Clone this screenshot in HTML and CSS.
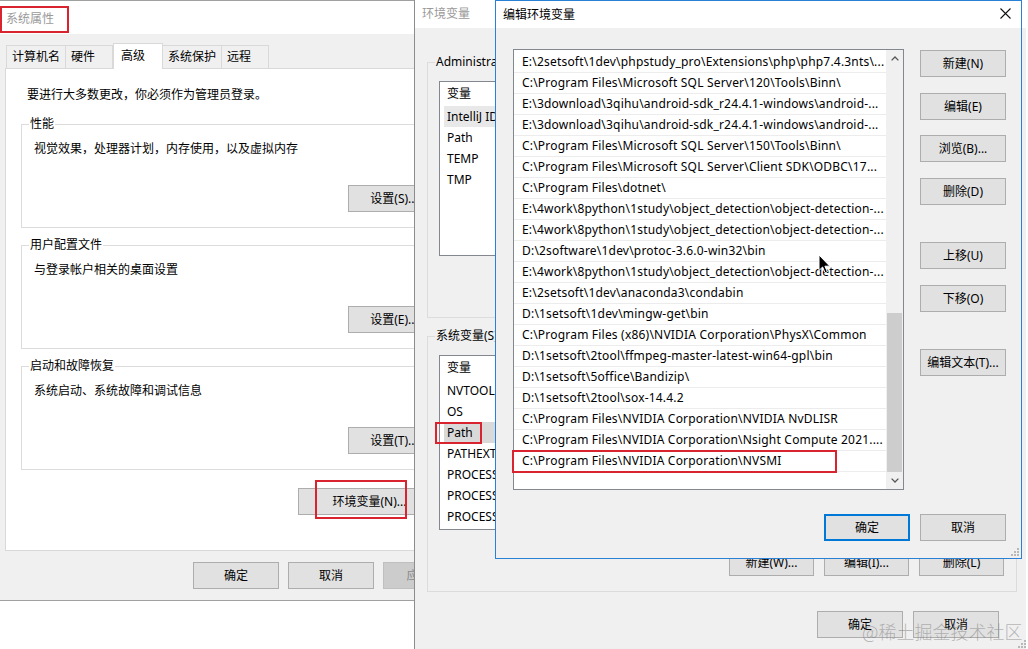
FILE: index.html
```html
<!DOCTYPE html>
<html lang="zh-CN">
<head>
    <meta charset="UTF-8">
    <meta name="viewport" content="width=device-width, initial-scale=1.0">
    <title>编辑环境变量</title>
    <link rel="stylesheet" href="styles.css">
</head>
<body>
<div class="desktop">

    <!-- 系统属性 -->
    <section class="win win-sys">
        <header class="titlebar"><span class="title">系统属性</span></header>
        <div class="sys-body">
            <div class="tabs">
                <span class="tab">计算机名</span>
                <span class="tab">硬件</span>
                <span class="tab active">高级</span>
                <span class="tab">系统保护</span>
                <span class="tab">远程</span>
            </div>
            <div class="tab-panel">
                <p class="notice">要进行大多数更改，你必须作为管理员登录。</p>

                <fieldset class="group">
                    <legend>性能</legend>
                    <p class="desc">视觉效果，处理器计划，内存使用，以及虚拟内存</p>
                    <div class="group-actions"><button class="btn btn-set">设置(S)...</button></div>
                </fieldset>

                <fieldset class="group">
                    <legend>用户配置文件</legend>
                    <p class="desc">与登录帐户相关的桌面设置</p>
                    <div class="group-actions"><button class="btn btn-set">设置(E)...</button></div>
                </fieldset>

                <fieldset class="group">
                    <legend>启动和故障恢复</legend>
                    <p class="desc">系统启动、系统故障和调试信息</p>
                    <div class="group-actions"><button class="btn btn-set">设置(T)...</button></div>
                </fieldset>

                <div class="env-row"><button class="btn btn-env">环境变量(N)...</button></div>
            </div>
            <div class="sys-actions">
                <button class="btn">确定</button>
                <button class="btn">取消</button>
                <button class="btn" disabled>应用(A)</button>
            </div>
        </div>
    </section>

    <!-- 环境变量 -->
    <section class="win win-env">
        <header class="titlebar"><span class="title">环境变量</span></header>
        <div class="env-body">
            <fieldset class="group var-group user-vars">
                <legend>Administrator 的用户变量(U)</legend>
                <div class="listview">
                    <div class="lv-head">变量</div>
                    <div class="lv-row hover">IntelliJ IDEA</div>
                    <div class="lv-row">Path</div>
                    <div class="lv-row">TEMP</div>
                    <div class="lv-row">TMP</div>
                </div>
            </fieldset>

            <fieldset class="group var-group">
                <legend>系统变量(S)</legend>
                <div class="listview">
                    <div class="lv-head">变量</div>
                    <div class="lv-row">NVTOOLSEXT_PATH</div>
                    <div class="lv-row">OS</div>
                    <div class="lv-row selected">Path</div>
                    <div class="lv-row">PATHEXT</div>
                    <div class="lv-row">PROCESSOR_ARCHITECTURE</div>
                    <div class="lv-row">PROCESSOR_IDENTIFIER</div>
                    <div class="lv-row">PROCESSOR_LEVEL</div>
                </div>
                <div class="var-actions">
                    <button class="btn">新建(W)...</button>
                    <button class="btn">编辑(I)...</button>
                    <button class="btn">删除(L)</button>
                </div>
            </fieldset>

            <div class="env-actions">
                <button class="btn">确定</button>
                <button class="btn">取消</button>
            </div>
        </div>
        <svg class="grip grip-env" width="8" height="8" viewBox="0 0 8 8"><g fill="#b8b8b8"><rect x="6" y="0" width="2" height="2"/><rect x="6" y="3" width="2" height="2"/><rect x="3" y="3" width="2" height="2"/><rect x="6" y="6" width="2" height="2"/><rect x="3" y="6" width="2" height="2"/><rect x="0" y="6" width="2" height="2"/></g></svg>
    </section>

    <!-- 编辑环境变量 -->
    <section class="win win-edit">
        <header class="titlebar">
            <span class="title">编辑环境变量</span>
            <svg class="close-icon" width="11" height="11" viewBox="0 0 11 11"><path d="M0.5 0.5L10.5 10.5M10.5 0.5L0.5 10.5" stroke="#111" stroke-width="1.1" fill="none"/></svg>
        </header>
        <div class="edit-body">
            <div class="listbox">
                <ul class="path-list">
                    <li>E:\2setsoft\1dev\phpstudy_pro\Extensions\php\php7.4.3nts\...</li>
                    <li>C:\Program Files\Microsoft SQL Server\120\Tools\Binn\</li>
                    <li>E:\3download\3qihu\android-sdk_r24.4.1-windows\android-...</li>
                    <li>E:\3download\3qihu\android-sdk_r24.4.1-windows\android-...</li>
                    <li>C:\Program Files\Microsoft SQL Server\150\Tools\Binn\</li>
                    <li>C:\Program Files\Microsoft SQL Server\Client SDK\ODBC\17...</li>
                    <li>C:\Program Files\dotnet\</li>
                    <li>E:\4work\8python\1study\object_detection\object-detection-...</li>
                    <li>E:\4work\8python\1study\object_detection\object-detection-...</li>
                    <li>D:\2software\1dev\protoc-3.6.0-win32\bin</li>
                    <li>E:\4work\8python\1study\object_detection\object-detection-...</li>
                    <li>E:\2setsoft\1dev\anaconda3\condabin</li>
                    <li>D:\1setsoft\1dev\mingw-get\bin</li>
                    <li>C:\Program Files (x86)\NVIDIA Corporation\PhysX\Common</li>
                    <li>D:\1setsoft\2tool\ffmpeg-master-latest-win64-gpl\bin</li>
                    <li>D:\1setsoft\5office\Bandizip\</li>
                    <li>D:\1setsoft\2tool\sox-14.4.2</li>
                    <li>C:\Program Files\NVIDIA Corporation\NVIDIA NvDLISR</li>
                    <li>C:\Program Files\NVIDIA Corporation\Nsight Compute 2021....</li>
                    <li>C:\Program Files\NVIDIA Corporation\NVSMI</li>
                </ul>
                <div class="scrollbar">
                    <span class="sb-arrow"><svg width="8" height="5" viewBox="0 0 8 5"><path d="M0.6 4.4L4 1L7.4 4.4" fill="none" stroke="#555" stroke-width="1.3"/></svg></span>
                    <span class="sb-track"><span class="sb-thumb"></span></span>
                    <span class="sb-arrow"><svg width="8" height="5" viewBox="0 0 8 5"><path d="M0.6 0.6L4 4L7.4 0.6" fill="none" stroke="#555" stroke-width="1.3"/></svg></span>
                </div>
            </div>

            <div class="side-buttons">
                <button class="btn">新建(N)</button>
                <button class="btn">编辑(E)</button>
                <button class="btn">浏览(B)...</button>
                <button class="btn">删除(D)</button>
                <button class="btn gap-before">上移(U)</button>
                <button class="btn">下移(O)</button>
                <button class="btn gap-before">编辑文本(T)...</button>
            </div>

            <div class="edit-actions">
                <button class="btn btn-default">确定</button>
                <button class="btn">取消</button>
            </div>
        </div>
        <svg class="grip grip-edit" width="8" height="8" viewBox="0 0 8 8"><g fill="#b8b8b8"><rect x="6" y="0" width="2" height="2"/><rect x="6" y="3" width="2" height="2"/><rect x="3" y="3" width="2" height="2"/><rect x="6" y="6" width="2" height="2"/><rect x="3" y="6" width="2" height="2"/><rect x="0" y="6" width="2" height="2"/></g></svg>
    </section>

    <!-- annotations -->
    <span class="mark mark-title"></span>
    <span class="mark mark-env"></span>
    <span class="mark mark-path"></span>
    <span class="mark mark-nvsmi"></span>

    <svg class="cursor" width="13" height="20" viewBox="0 0 13 20"><path d="M1 1V16.5L4.6 13L7.1 18.8L9.4 17.8L6.9 12.2H11.8Z" fill="#000" stroke="#fff" stroke-width="1" stroke-linejoin="round"/></svg>

    <div class="watermark">@稀土掘金技术社区</div>
</div>
</body>
</html>
```

FILE: styles.css
```css
* {
    box-sizing: border-box;
}

body {
    margin: 0;
    background: #fff;
    font-family: "Noto Sans", "Noto Sans CJK SC", sans-serif;
    font-size: 12px;
    color: #000;
}

p {
    margin: 0;
}

.desktop {
    position: relative;
    width: 1028px;
    height: 649px;
    overflow: hidden;
}

/* windows */
.win {
    position: absolute;
    top: 0;
    display: flex;
    flex-direction: column;
    background: #f0f0f0;
}

.titlebar {
    flex: none;
    display: flex;
    align-items: center;
    justify-content: space-between;
    background: #fff;
}

.title {
    color: #9a9a9a;
    white-space: nowrap;
}

.btn {
    height: 27px;
    padding: 0;
    border: 1px solid #adadad;
    background: #e1e1e1;
    font: inherit;
    color: #000;
    line-height: 25px;
    white-space: nowrap;
}

.btn:disabled {
    background: #cccccc;
    border-color: #bfbfbf;
    color: #8a8a8a;
}

.btn-default {
    border: 2px solid #0078d7;
    line-height: 23px;
}

.group {
    min-width: 0;
    margin: 0 0 9px;
    padding: 0 16px 15px 0;
    border: 1px solid #dcdcdc;
}

.group legend {
    margin-left: 7px;
    padding: 0 1px;
    line-height: 16px;
    white-space: nowrap;
}

/* 系统属性 */
.win-sys {
    left: 0;
    width: 478px;
    height: 601px;
    border-top: 1px solid #a0a0a0;
    border-bottom: 1px solid #a0a0a0;
    z-index: 1;
}

.win-sys .titlebar {
    height: 33px;
    padding-left: 6px;
}

.sys-body {
    padding: 9px 5px 0;
}

.tabs {
    display: flex;
    align-items: flex-end;
    height: 25px;
    padding-left: 1px;
}

.tab {
    height: 23px;
    min-width: 48px;
    margin-left: -1px;
    padding: 0 5px;
    border: 1px solid #d9d9d9;
    border-bottom: 0;
    background: #f0f0f0;
    line-height: 21px;
}

.tab:first-child {
    margin-left: 0;
}

.tab.active {
    position: relative;
    z-index: 1;
    height: 26px;
    min-width: 50px;
    margin: 0 0 -1px;
    padding-left: 7px;
    background: #fff;
    line-height: 23px;
}

.tab-panel {
    height: 483px;
    padding: 18px 15px 0;
    border: 1px solid #d9d9d9;
    background: #fff;
}

.notice {
    margin: 0 0 13px 6px;
    line-height: 16px;
}

.desc {
    margin: 9px 0 0 12px;
    line-height: 16px;
}

.group-actions {
    display: flex;
    justify-content: flex-end;
    margin-top: 28px;
}

.btn-set {
    width: 92px;
}

.env-row {
    display: flex;
    justify-content: flex-end;
    margin-top: 18px;
    padding-right: 16px;
}

.btn-env {
    width: 143px;
}

.sys-actions {
    display: flex;
    justify-content: flex-end;
    gap: 9px;
    margin-top: 11px;
    padding-right: 4px;
}

.sys-actions .btn {
    width: 86px;
}

/* 环境变量 */
.win-env {
    left: 414px;
    width: 612px;
    height: 652px;
    border-left: 1px solid #8c8c8c;
    z-index: 2;
}

.win-env .titlebar {
    height: 28px;
    padding: 0 0 3px 7px;
}

.env-body {
    padding: 26px 9px 0 12px;
}

.var-group {
    margin: 0;
    padding-right: 12px;
}

/* its buttons sit under the edit dialog */
.user-vars {
    padding-bottom: 61px;
}

.var-group + .var-group {
    margin-top: 10px;
}

.listview {
    height: 175px;
    margin: 11px 0 0 11px;
    border: 1px solid #828790;
    background: #fff;
    overflow: hidden;
}

.lv-head {
    height: 24px;
    padding-left: 7px;
    line-height: 24px;
}

.lv-row {
    height: 21px;
    margin-left: 4px;
    padding-left: 3px;
    line-height: 21px;
    white-space: nowrap;
}

.lv-row.hover {
    background: #e8e8e8;
}

.lv-row.selected {
    background: #d9d9d9;
}

.var-actions {
    display: flex;
    justify-content: flex-end;
    gap: 10px;
    margin-top: 19px;
}

.var-actions .btn {
    width: 85px;
}

.env-actions {
    display: flex;
    justify-content: flex-end;
    gap: 10px;
    margin-top: 19px;
    padding-right: 18px;
}

.env-actions .btn {
    width: 86px;
}

/* 编辑环境变量 */
.win-edit {
    left: 495px;
    width: 527px;
    height: 559px;
    border: 1px solid #2a80d5;
    z-index: 3;
}

.win-edit .titlebar {
    height: 27px;
    padding: 0 10px 2px 7px;
}

.win-edit .title {
    color: #000;
}

.edit-body {
    display: grid;
    grid-template-columns: 391px 86px;
    grid-template-rows: 441px auto;
    column-gap: 16px;
    row-gap: 24px;
    padding: 21px 14px 0 17px;
}

.listbox {
    display: flex;
    border: 1px solid #828790;
    background: #fff;
}

.path-list {
    flex: 1;
    min-width: 0;
    margin: 0;
    padding: 2px 0 0;
    list-style: none;
    letter-spacing: 0.2px;
}

.path-list li {
    height: 21px;
    padding-left: 8px;
    border-bottom: 1px solid #ececec;
    line-height: 20px;
    white-space: nowrap;
    overflow: hidden;
}

.scrollbar {
    display: flex;
    flex-direction: column;
    width: 17px;
    background: #f0f0f0;
}

.sb-arrow {
    display: flex;
    align-items: center;
    justify-content: center;
    height: 17px;
}

.sb-track {
    flex: 1;
    display: flex;
    flex-direction: column;
    justify-content: flex-end;
}

.sb-thumb {
    height: 159px;
    margin: 0 1px;
    background: #cdcdcd;
}

.side-buttons {
    display: flex;
    flex-direction: column;
    gap: 15.5px;
    padding-top: 1px;
}

.side-buttons .btn {
    width: 86px;
}

.side-buttons .gap-before {
    margin-top: 22px;
}

.edit-actions {
    grid-column: 1 / -1;
    display: flex;
    justify-content: flex-end;
    gap: 10px;
}

.edit-actions .btn {
    width: 86px;
}

.grip {
    position: absolute;
}

.grip-edit {
    right: 2px;
    bottom: 2px;
}

.grip-env {
    right: 0;
    bottom: 4px;
}

/* annotations */
.mark {
    position: absolute;
    border: 2px solid #d9232e;
    z-index: 4;
}

.mark-title { left: 0; top: 6px; width: 69px; height: 27px; }
.mark-env { left: 315px; top: 480px; width: 92px; height: 39px; }
.mark-path { left: 435px; top: 422px; width: 47px; height: 22px; }
.mark-nvsmi { left: 512px; top: 450px; width: 325px; height: 23px; }

.cursor {
    position: absolute;
    left: 818px;
    top: 254px;
    z-index: 5;
}

.watermark {
    position: absolute;
    left: 862px;
    top: 619px;
    z-index: 6;
    font-family: "Noto Sans CJK SC", sans-serif;
    font-size: 18px;
    font-weight: 300;
    line-height: 24px;
    color: rgba(130, 130, 130, 0.55);
    white-space: nowrap;
}
```
